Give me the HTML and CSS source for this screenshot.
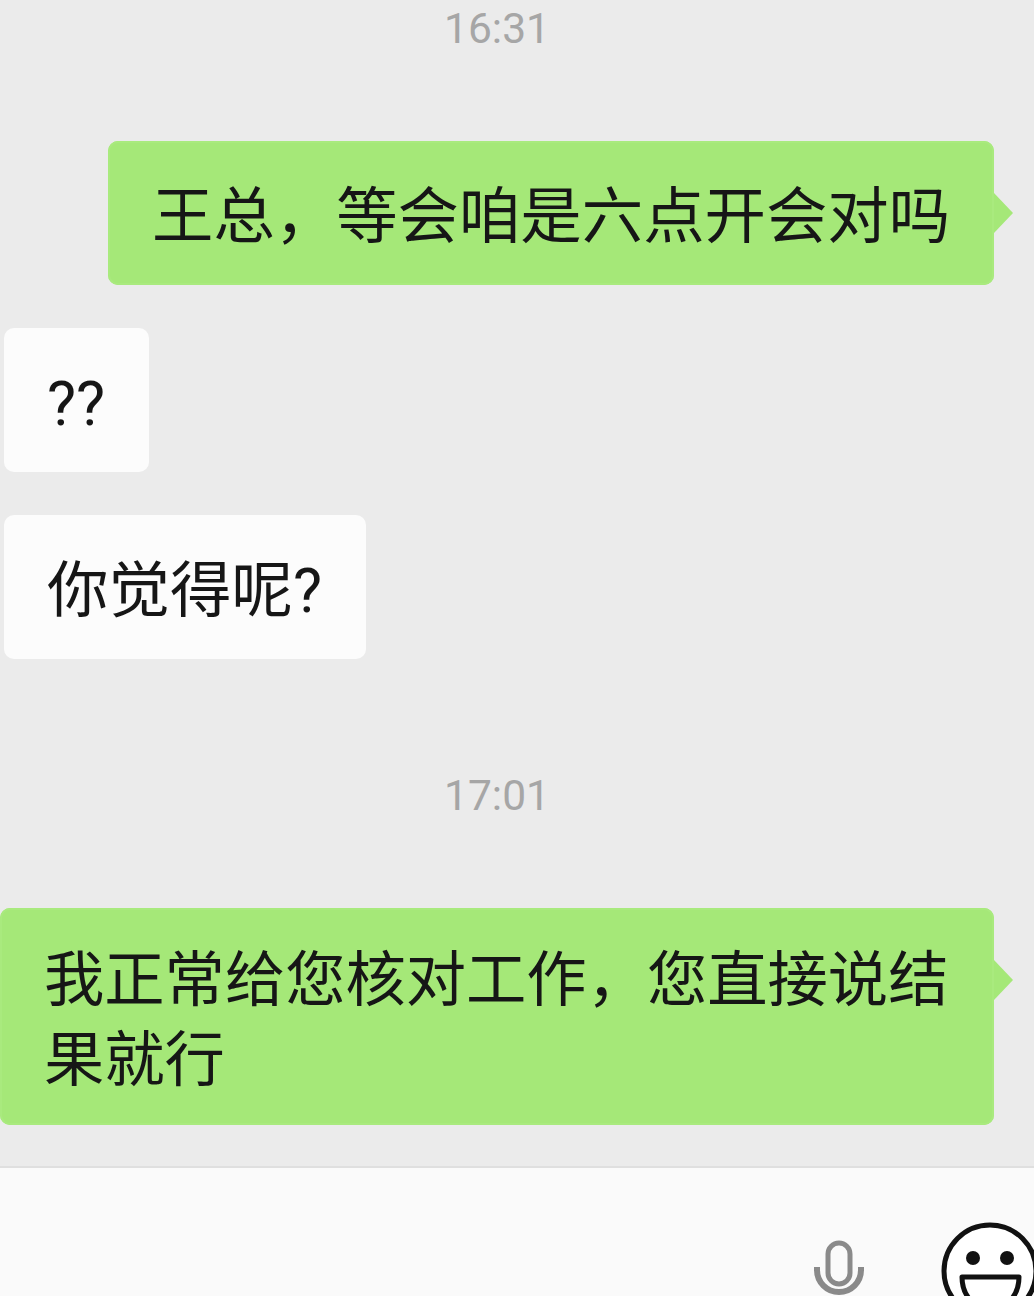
FILE: index.html
```html
<!DOCTYPE html>
<html lang="zh-CN">
  <head>
    <meta charset="UTF-8" />
    <title>聊天</title>
    <link rel="stylesheet" href="styles.css">
  </head>
  <body>
    <div class="chat">
      <div class="messages">
        <div class="time time-first">16:31</div>

        <div class="row row-me row-first">
          <div class="bubble bubble-me bubble-short">王总，等会咱是六点开会对吗</div>
        </div>

        <div class="row row-other row-q">
          <div class="bubble bubble-other">??</div>
        </div>

        <div class="row row-other row-next">
          <div class="bubble bubble-other">你觉得呢?</div>
        </div>

        <div class="time time-second">17:01</div>

        <div class="row row-me row-last">
          <div class="bubble bubble-me bubble-long">我正常给您核对工作，您直接说结果就行</div>
        </div>
      </div>

      <div class="input-bar">
        <svg class="mic" width="50" height="60" viewBox="0 0 50 60">
          <rect x="14" y="3" width="22" height="41" rx="11" fill="none" stroke="#8a8a8a" stroke-width="5" />
          <path d="M3 27v3a22 22 0 0 0 44 0v-3" fill="none" stroke="#8a8a8a" stroke-width="6" />
        </svg>
        <svg class="smile" width="100" height="100" viewBox="0 0 100 100">
          <circle cx="50" cy="50" r="46" fill="#fff" stroke="#111" stroke-width="5" />
          <circle cx="33" cy="37" r="7" fill="#111" />
          <circle cx="67" cy="37" r="7" fill="#111" />
          <path d="M22 56h57c0 20-14 32-28.500 32s-28.500-12-28.500-32z" fill="#fff" stroke="#111" stroke-width="5" stroke-linejoin="round" />
        </svg>
      </div>
    </div>
  </body>
</html>
```

FILE: styles.css
```css
* {
  box-sizing: border-box;
}

html,
body {
  margin: 0;
  height: 100%;
  overflow: hidden;
}

body {
  background: #ebebeb;
  font-family: Roboto, "Noto Sans CJK SC", sans-serif;
}

.chat {
  display: flex;
  flex-direction: column;
  height: 1296px;
}

.messages {
  flex: 1;
}

.time {
  width: 994px;
  text-align: center;
  font-size: 42.500px;
  line-height: 48px;
  color: #a6a6a6;
}

.time-first {
  padding-top: 5px;
  height: 53px;
}

.time-second {
  margin-top: 113px;
}

.row {
  display: flex;
}

.row-me {
  justify-content: flex-end;
  padding-right: 40px;
}

.row-other {
  padding-left: 4px;
}

.row-first {
  margin-top: 88px;
}

.row-q {
  margin-top: 43px;
}

.row-next {
  margin-top: 43px;
}

.row-last {
  margin-top: 88px;
}

.bubble {
  position: relative;
  padding: 36px 44px 28px 43px;
  min-height: 144px;
  font-size: 61.500px;
  line-height: 80px;
  color: #161616;
  border-radius: 10px;
}

.bubble-me {
  background: #a5e878;
  box-shadow: inset 0 0 0 2px #a9ea7e;
}

.bubble-me::after {
  content: "";
  position: absolute;
  top: 52px;
  right: -19px;
  border-top: 20px solid transparent;
  border-bottom: 20px solid transparent;
  border-left: 19px solid #a5e878;
}

.bubble-other {
  background: #fcfcfc;
}

.bubble-short {
  width: 886px;
  padding-left: 44px;
  font-size: 61.400px;
  white-space: nowrap;
}

.bubble-long {
  width: 994px;
  padding: 33px 40px 24px 44px;
  font-size: 60.300px;
}

.input-bar {
  flex: none;
  height: 130px;
  border-top: 2px solid #dfdfdf;
  background: #fafafa;
  display: flex;
  justify-content: flex-end;
  align-items: flex-start;
  overflow: hidden;
}

.mic {
  flex: none;
  margin-top: 72px;
  margin-right: 76px;
}

.smile {
  flex: none;
  margin-top: 53px;
  margin-right: -6px;
}
```
